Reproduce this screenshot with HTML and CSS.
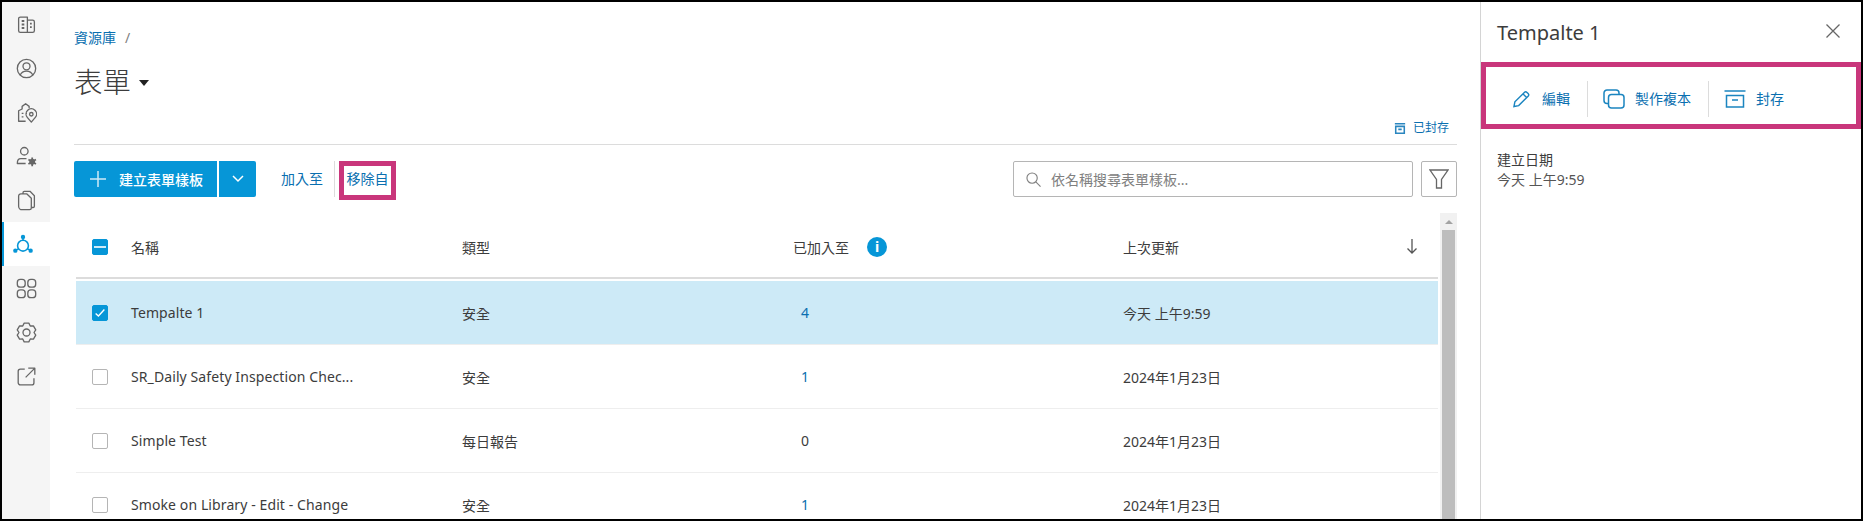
FILE: index.html
```html
<!DOCTYPE html>
<html lang="zh-Hant">
<head>
<meta charset="utf-8">
<title>表單</title>
<link rel="stylesheet" href="styles.css">
</head>
<body>
<div class="frame">
  <nav class="rail">
    <div class="rail-item"><svg viewBox="0 0 24 24" class="ri"><path d="M13 3.500V21H5a2 2 0 0 1-2-2V5.500a2 2 0 0 1 2-2zM13 7h6a2 2 0 0 1 2 2v10a2 2 0 0 1-2 2h-6"/><path d="M6.500 8h3M6.500 12h3M6.500 16h3M16 11h2M16 15h2" class="thick2"/></svg></div>
    <div class="rail-item"><svg viewBox="0 0 24 24" class="ri"><circle cx="12" cy="12" r="10.500"/><circle cx="12" cy="9.500" r="4"/><path d="M4.800 19.500c1.300-3 3.900-4.500 7.200-4.500s5.900 1.500 7.200 4.500"/></svg></div>
    <div class="rail-item"><svg viewBox="0 0 24 24" class="ri"><path d="M11 22H3V10l4-2V5l4-3 4 3v2M6.500 13h2M6.500 17h2M11.500 13h1"/><path d="M17.500 23l-4.600-5.400a6 6 0 1 1 9.200 0z"/><circle cx="17.500" cy="14" r="2"/></svg></div>
    <div class="rail-item"><svg viewBox="0 0 24 24" class="ri"><circle cx="9.500" cy="6" r="4.300"/><path d="M12 14.500H5.500C3 14.500 1.500 16.500 1.500 20H11"/><circle cx="18.500" cy="18" r="3.300" class="solid"/><path d="M18.500 13v10M14.200 15.500l8.600 5M14.200 20.500l8.600-5" class="thick"/></svg></div>
    <div class="rail-item"><svg viewBox="0 0 24 24" class="ri"><path d="M8 4.500V3a1.500 1.500 0 0 1 1.500-1.500H16l5 5v12a1.500 1.500 0 0 1-1.500 1.500H17.500"/><path d="M5.500 4.500h7L17.500 9.500v11a2 2 0 0 1-2 2H7a4 4 0 0 1-4-4V7a2.500 2.500 0 0 1 2.500-2.500z"/></svg></div>
    <div class="rail-item active"><svg viewBox="0 0 24 24" class="ri blue"><circle cx="12" cy="3.500" r="2.600" class="dot"/><circle cx="2.800" cy="20" r="2.600" class="dot"/><circle cx="21.200" cy="20" r="2.600" class="dot"/><circle cx="12" cy="14" r="6.500"/><path d="M12 4v4M4 19l3-1.500M20 19l-3-1.500"/></svg></div>
    <div class="rail-item"><svg viewBox="0 0 24 24" class="ri"><rect x="1.500" y="1.500" width="9" height="9" rx="3.500"/><rect x="13.500" y="1.500" width="9" height="9" rx="3.500"/><rect x="1.500" y="13.500" width="9" height="9" rx="3.500"/><rect x="13.500" y="13.500" width="9" height="9" rx="3.500"/></svg></div>
    <div class="rail-item"><svg viewBox="0 0 24 24" class="ri"><circle cx="12" cy="12" r="4"/><path d="M9.340 1.330L14.660 1.330L16.300 4.550L19.910 4.360L22.570 8.970L20.600 12L22.570 15.030L19.910 19.640L16.300 19.450L14.660 22.670L9.340 22.670L7.700 19.450L4.090 19.640L1.430 15.030L3.400 12L1.430 8.970L4.090 4.360L7.700 4.550Z"/></svg></div>
    <div class="rail-item"><svg viewBox="0 0 24 24" class="ri"><path d="M10 3.500H5a2.500 2.500 0 0 0-2.500 2.500v13A2.500 2.500 0 0 0 5 21.500h13a2.500 2.500 0 0 0 2.500-2.500v-5M11 13L21 3M14 2.500h7.500V10"/></svg></div>
  </nav>

  <main class="main">
    <div class="crumb"><a class="link">資源庫</a><span class="slash">/</span></div>
    <div class="title-row"><h1 class="title">表單</h1><span class="caret"></span></div>
    <div class="archived-row">
      <a class="archived"><svg viewBox="0 0 14 14" class="arch-ic"><path d="M1 1.500h12M2 4.500h10v8H2zM5 8h4"/></svg>已封存</a>
    </div>
    <div class="toolbar">
      <div class="split">
        <button class="btn-main"><svg viewBox="0 0 16 16" class="plus"><path d="M8 0v16M0 8h16"/></svg><span>建立表單樣板</span></button>
        <button class="btn-more"><svg viewBox="0 0 12 8" class="chev"><path d="M1 1l5 5 5-5"/></svg></button>
      </div>
      <a class="tool-link add">加入至</a>
      <span class="tool-sep"></span>
      <a class="tool-link remove">移除自</a>
      <div class="spacer"></div>
      <div class="search">
        <svg viewBox="0 0 16 16" class="search-ic"><circle cx="6.500" cy="6.500" r="5.500"/><path d="M10.500 10.500L15.500 15.500"/></svg>
        <span class="placeholder">依名稱搜尋表單樣板...</span>
      </div>
      <button class="filter"><svg viewBox="0 0 20 20" class="filter-ic"><path d="M1 1h18l-6.500 9.500V19h-5v-8.500z"/></svg></button>
    </div>

    <div class="table-wrap">
      <div class="table">
        <div class="row head">
          <div class="c-check"><span class="cb on"><span class="dash"></span></span></div>
          <div class="c-name">名稱</div>
          <div class="c-type">類型</div>
          <div class="c-added">已加入至<span class="info">i</span></div>
          <div class="c-date">上次更新</div>
          <svg viewBox="0 0 10 15" class="sort"><path d="M5 0v14M.5 9.500L5 14l4.500-4.500"/></svg>
        </div>
        <div class="row selected">
          <div class="c-check"><span class="cb on"><svg viewBox="0 0 16 16" class="tick"><path d="M3 8.500l3.200 3L13 4"/></svg></span></div>
          <div class="c-name">Tempalte 1</div>
          <div class="c-type">安全</div>
          <div class="c-added num-link">4</div>
          <div class="c-date">今天 上午9:59</div>
        </div>
        <div class="row">
          <div class="c-check"><span class="cb"></span></div>
          <div class="c-name">SR_Daily Safety Inspection Chec...</div>
          <div class="c-type">安全</div>
          <div class="c-added num-link">1</div>
          <div class="c-date">2024年1月23日</div>
        </div>
        <div class="row">
          <div class="c-check"><span class="cb"></span></div>
          <div class="c-name">Simple Test</div>
          <div class="c-type">每日報告</div>
          <div class="c-added num-plain">0</div>
          <div class="c-date">2024年1月23日</div>
        </div>
        <div class="row">
          <div class="c-check"><span class="cb"></span></div>
          <div class="c-name">Smoke on Library - Edit - Change</div>
          <div class="c-type">安全</div>
          <div class="c-added num-link">1</div>
          <div class="c-date">2024年1月23日</div>
        </div>
      </div>
      <div class="scrollbar"><span class="sb-up"></span><span class="sb-thumb"></span></div>
    </div>
  </main>

  <aside class="panel">
    <div class="panel-head">
      <h2 class="panel-title">Tempalte 1</h2>
      <svg viewBox="0 0 14 14" class="close"><path d="M0.500 0.500l13 13M13.500 0.500l-13 13"/></svg>
    </div>
    <div class="actions">
      <a class="action a-edit"><svg viewBox="0 0 18 18" class="ac-ic"><path d="M1 17l1-5L12 2a2 2 0 0 1 2.800 0l1.200 1.200a2 2 0 0 1 0 2.800L6 16zM10.500 3.500l4 4"/></svg><span class="ac-text">編輯</span></a>
      <a class="action a-copy"><svg viewBox="0 0 22 20" class="ac-ic wide tall"><path d="M5 14.500H4a3 3 0 0 1-3-3V4a3 3 0 0 1 3-3h9a3 3 0 0 1 3 3v1.500"/><rect x="5.500" y="5.500" width="15.500" height="13.500" rx="3"/></svg><span class="ac-text">製作複本</span></a>
      <a class="action a-arch"><svg viewBox="0 0 22 18" class="ac-ic wide"><path d="M0.500 1h21M2.500 5.500h17V17h-17zM8 10h6"/></svg><span class="ac-text">封存</span></a>
    </div>
    <div class="meta">
      <div class="meta-label">建立日期</div>
      <div class="meta-value">今天 上午9:59</div>
    </div>
  </aside>
</div>
</body>
</html>
```

FILE: styles.css
```css
* { box-sizing: border-box; }
html, body { margin: 0; padding: 0; height: 100%; background: #000; }
body { font-family: "Noto Sans", "Noto Sans CJK TC", sans-serif; font-size: 14px; color: #3c3c3c; overflow: hidden; }
a { color: #0a6fb0; text-decoration: none; }
h1, h2 { margin: 0; font-weight: 400; }
button { font: inherit; border: 0; padding: 0; }

.frame { height: 521px; width: 1863px; border: 2px solid #000; background: #fff; display: flex; overflow: hidden; }

/* rail */
.rail { width: 48px; flex: none; background: #f5f5f5; display: flex; flex-direction: column; }
.rail-item { height: 44px; display: flex; align-items: center; justify-content: center; flex: none; }
.rail-item.active { background: #fff; border-left: 2px solid #0696d7; padding-right: 8px; }
.ri { width: 21px; height: 21px; fill: none; stroke: #666; stroke-width: 1.500; stroke-linejoin: round; }
.ri.blue { stroke: #0696d7; stroke-width: 1.900; width: 20px; height: 20px; }
.ri .dot { fill: #0696d7; stroke: none; }
.ri .solid { fill: #666; stroke: none; }
.ri .thick { stroke-width: 2; }
.ri .thick2 { stroke-width: 2.200; }

/* main */
.main { width: 1430px; flex: none; padding: 0 23px 0 24px; display: flex; flex-direction: column; min-width: 0; }
.crumb { margin-top: 26px; height: 20px; line-height: 20px; display: flex; gap: 9px; }
.slash { color: #808080; }
.title-row { margin-top: 14px; height: 40px; display: flex; align-items: center; gap: 8px; }
.title { font-size: 28.500px; font-weight: 300; line-height: 40px; color: #3c3c3c; }
.caret { width: 0; height: 0; border: 5px solid transparent; border-top: 6px solid #222; border-bottom: 0; margin-top: 2px; }
.archived-row { margin-top: 18px; height: 16px; line-height: 16px; display: flex; justify-content: flex-end; padding-right: 8px; }
.archived { font-size: 12px; display: flex; align-items: center; gap: 7px; }
.arch-ic { width: 12px; height: 13px; fill: none; stroke: #2a86bf; stroke-width: 1.800; }
.toolbar { border-top: 1px solid #dcdcdc; margin-top: 8px; padding-top: 16px; display: flex; align-items: flex-start; height: 69px; flex: none; }
.split { display: flex; gap: 2px; height: 36px; }
.btn-main { width: 143px; height: 36px; background: #0696d7; color: #fff; border-radius: 2px 0 0 2px; display: flex; align-items: center; font-weight: 500; }
.plus { width: 16px; height: 16px; margin: 0 13px 0 16px; fill: none; stroke: #cfeaf7; stroke-width: 1.500; }
.btn-more { width: 37px; height: 36px; background: #0696d7; border-radius: 0 2px 2px 0; display: flex; align-items: center; justify-content: center; }
.chev { width: 12px; height: 8px; fill: none; stroke: #fff; stroke-width: 1.500; }
.tool-link { height: 36px; line-height: 36px; white-space: nowrap; flex: none; }
.add { margin-left: 25px; width: 42px; }
.tool-sep { width: 1px; height: 36px; background: #dcdcdc; margin-left: 11px; flex: none; }
.remove { margin-left: 4px; width: 57px; height: 39px; border: 5px solid #c9367b; line-height: 26px; text-align: center; }
.spacer { flex: 1; }
.search { width: 400px; height: 36px; border: 1px solid #b5b5b5; border-radius: 2px; display: flex; align-items: center; padding-left: 12px; }
.search-ic { width: 15px; height: 15px; fill: none; stroke: #808080; stroke-width: 1.200; margin-right: 10px; }
.placeholder { color: #808080; }
.filter { width: 36px; height: 36px; margin-left: 8px; border: 1px solid #b5b5b5; border-radius: 2px; background: #fff; display: flex; align-items: center; justify-content: center; }
.filter-ic { width: 20px; height: 20px; fill: none; stroke: #666; stroke-width: 1.300; }

/* table */
.table-wrap { display: flex; flex: 1; min-height: 0; }
.table { width: 1362px; margin-left: 2px; flex: none; }
.row { display: flex; align-items: center; height: 64px; border-bottom: 1px solid #eee; position: relative; }
.row.head { height: 66px; padding-top: 4px; border-bottom: 2px solid #dcdcdc; margin-bottom: 2px; }
.row.selected { background: #cdeaf7; }
.c-check { width: 55px; padding-left: 16px; flex: none; display: flex; }
.c-name { width: 331px; flex: none; letter-spacing: .1px; }
.c-type { width: 331px; flex: none; }
.c-added { width: 330px; flex: none; display: flex; align-items: center; }
.c-date { flex: 1; }
.num-link { color: #0a6fb0; padding-left: 8px; }
.num-plain { color: #3c3c3c; padding-left: 8px; }
.info { width: 20px; height: 20px; border-radius: 50%; background: #0696d7; color: #fff; font-weight: 700; font-size: 14px; line-height: 20px; text-align: center; margin-left: 18px; margin-top: -1px; }
.sort { width: 10px; height: 15px; fill: none; stroke: #555; stroke-width: 1.300; position: absolute; right: 21px; top: 26px; }
.cb { width: 16px; height: 16px; border: 1px solid #b5b5b5; border-radius: 2px; background: #fff; display: flex; align-items: center; justify-content: center; }
.cb.on { background: #0696d7; border-color: #0696d7; }
.dash { width: 12px; height: 2px; background: #cfeaf7; }
.tick { width: 14px; height: 14px; fill: none; stroke: #fff; stroke-width: 1.600; }
.scrollbar { width: 17px; margin-left: 2px; background: #f1f1f1; display: flex; flex-direction: column; align-items: center; }
.sb-up { width: 0; height: 0; border: 4px solid transparent; border-bottom: 4px solid #a3a3a3; border-top: 0; margin-top: 7px; flex: none; }
.sb-thumb { width: 13px; flex: 1; background: #bdbdbd; margin-top: 6px; }

/* panel */
.panel { width: 381px; flex: none; border-left: 1px solid #d4d4d4; background: #fff; display: flex; flex-direction: column; }
.panel-head { height: 60px; flex: none; padding: 0 21px 0 16px; display: flex; align-items: center; justify-content: space-between; }
.panel-title { font-size: 20px; line-height: 28px; color: #3c3c3c; margin-top: 2px; }
.close { width: 14px; height: 14px; fill: none; stroke: #666; stroke-width: 1.300; margin-top: -3px; }
.actions { height: 67px; flex: none; border: 5px solid #c9367b; padding-top: 14px; display: flex; align-items: flex-start; }
.action { height: 36px; display: flex; align-items: center; border-right: 1px solid #dcdcdc; }
.ac-text { margin-top: -2px; }
.a-edit { width: 102px; padding-left: 27px; }
.a-copy { width: 121px; padding-left: 15px; }
.a-arch { padding-left: 15px; border-right: 0; }
.ac-ic { width: 17px; height: 18px; fill: none; stroke: #1b85c0; stroke-width: 1.500; margin-right: 12px; }
.ac-ic.wide { width: 22px; margin-right: 10px; }
.ac-ic.tall { height: 20px; }
.meta { padding: 21px 0 0 16px; line-height: 20px; }
.meta-value { color: #555; }
```
